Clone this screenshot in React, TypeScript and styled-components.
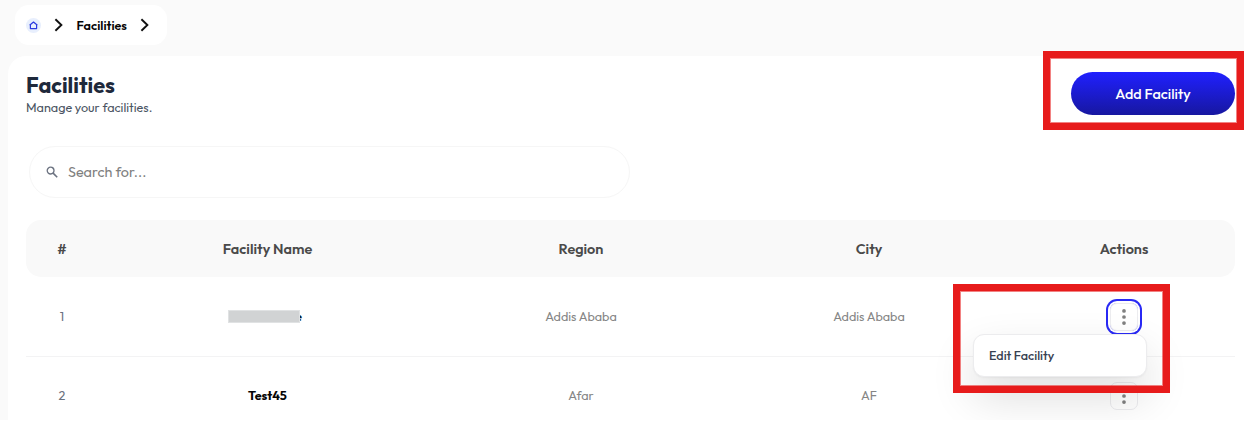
import React from "react";
import styled, { createGlobalStyle } from "styled-components";

const GlobalStyle = createGlobalStyle`
  *, *::before { box-sizing: border-box; }
  html, body { margin: 0; height: 421px; overflow: hidden; background: #fff; }
  body { font-family: Outfit, Lato, sans-serif; }
`;

const Page = styled.div`
  position: relative;
  width: 1244px;
  height: 420px;
  overflow: hidden;
  padding-top: 5px;
  background: #fafafa;
`;

const Label = styled.span<{ $size: number; $weight?: number; $color: string }>`
  font-size: ${(p) => p.$size}px;
  font-weight: ${(p) => p.$weight ?? 400};
  color: ${(p) => p.$color};
  line-height: 20px;
  white-space: nowrap;
`;

const CellText = styled(Label)`
  padding-bottom: 2px;
`;

const Breadcrumb = styled.nav`
  display: flex;
  align-items: center;
  width: 152px;
  height: 40px;
  margin-left: 15px;
  padding-left: 11px;
  border-radius: 14px;
  background: #fff;
`;

const HomeBadge = styled.span`
  display: grid;
  place-items: center;
  width: 15px;
  height: 15px;
  margin-right: 13px;
  border-radius: 50%;
  background: #e8effd;
`;

const Crumb = styled.span`
  display: flex;
  width: 51px;
  margin: 0 12.5px 0 13.5px;
`;

const Panel = styled.main`
  height: 400px;
  margin: 11px 0 0 8px;
  padding: 16px 9px 0 18px;
  border-top-left-radius: 18px;
  background: #fff;
`;

const PanelHeader = styled.header`
  display: flex;
  justify-content: space-between;
  height: 74px;
`;

const Heading = styled.div`
  display: flex;
  flex-direction: column;
`;

const Title = styled.h1`
  margin: 0 0 -2px;
  font-size: 21.6px;
  line-height: 27px;
  font-weight: 700;
  color: #1e293b;
`;

const AddButton = styled.button`
  width: 164px;
  height: 43px;
  padding: 0;
  border: 0;
  border-radius: 22px;
  font-family: inherit;
  background: linear-gradient(180deg, #2020ff, #1717a0);
`;

const SearchBox = styled.div`
  display: flex;
  align-items: center;
  gap: 9px;
  width: 601px;
  height: 52px;
  margin-left: 3px;
  padding-left: 16px;
  border: 1px solid #f6f6f6;
  border-radius: 26px;
`;

const Table = styled.div`
  margin-top: 22px;
`;

const Row = styled.div`
  display: grid;
  grid-template-columns: 72px 339px 288px 288px 222px;
  align-items: center;
  justify-items: center;
  height: 79px;
  & + & { border-top: 1px solid #f3f3f4; }
`;

const HeadRow = styled(Row)`
  height: 57px;
  border-radius: 15px;
  background: #f9f9f9;
  & + ${Row} { border-top: 0; }
`;

const Redacted = styled.span`
  position: relative;
  display: flex;
  justify-content: flex-end;
  width: 69px;
  &::before {
    content: "";
    position: absolute;
    left: -5px;
    top: 4px;
    width: 72px;
    height: 13px;
    border: 1px solid #e0e2e3;
    background: #d1d3d4;
  }
`;

const MoreButton = styled.button<{ $active?: boolean }>`
  display: grid;
  place-items: center;
  width: 28px;
  height: 28px;
  padding: 0;
  border: 1px solid #ececef;
  border-radius: 7px;
  background: transparent;
  box-shadow: ${(p) => (p.$active ? "0 0 0 2px #fff, 0 0 0 4px #2929f5" : "none")};
`;

const Menu = styled.div`
  position: absolute;
  left: 973px;
  top: 334px;
  display: flex;
  align-items: center;
  width: 174px;
  height: 43px;
  padding-left: 15px;
  border: 1px solid #ececee;
  border-radius: 11px;
  background: #fff;
  box-shadow: 0 20px 45px rgba(0, 0, 0, 0.14), 0 1px 2px rgba(0, 0, 0, 0.04);
`;

const Highlight = styled.div<{ $x: number; $y: number; $w: number; $h: number }>`
  position: absolute;
  left: ${(p) => p.$x}px;
  top: ${(p) => p.$y}px;
  width: ${(p) => p.$w}px;
  height: ${(p) => p.$h}px;
  border: 7px solid #e71b1b;
  box-shadow: inset 0 0 0 1px rgba(231, 27, 27, 0.55);
`;

const HomeIcon = () => (
  <svg width="9" height="9" viewBox="0 0 9 9" fill="none" stroke="#2c3be0" strokeWidth="1.2" strokeLinejoin="round">
    <path d="M.6 4.3 4.5 1l3.9 3.3M1.4 3.9v3.7h6.2V3.9" />
  </svg>
);

const Chevron = () => (
  <svg width="9" height="14" viewBox="0 0 9 14" fill="none" stroke="#111" strokeWidth="1.9">
    <path d="M1.4 1.2 7.4 7l-6 5.8" />
  </svg>
);

const SearchIcon = () => (
  <svg width="13" height="13" viewBox="0 0 13 13" fill="none" stroke="#6b7280" strokeWidth="1.3">
    <circle cx="4.6" cy="4.6" r="3.4" />
    <path d="m7.1 7.1 4.1 4.1" strokeWidth="1.6" />
  </svg>
);

const Dots = () => (
  <svg width="6" height="18" viewBox="0 0 6 18" fill="#808080">
    <circle cx="3" cy="2.9" r="1.85" />
    <circle cx="3" cy="9" r="1.85" />
    <circle cx="3" cy="15.1" r="1.85" />
  </svg>
);

const columns = ["#", "Facility Name", "Region", "City", "Actions"];

export default function App() {
  return (
    <Page>
      <GlobalStyle />
      <Breadcrumb>
        <HomeBadge><HomeIcon /></HomeBadge>
        <Chevron />
        <Crumb><Label $size={12.6} $weight={600} $color="#050505">Facilities</Label></Crumb>
        <Chevron />
      </Breadcrumb>
      <Panel>
        <PanelHeader>
          <Heading>
            <Title>Facilities</Title>
            <Label $size={12.6} $color="#4b5563">Manage your facilities.</Label>
          </Heading>
          <AddButton>
            <Label $size={14.4} $weight={500} $color="#fff">Add Facility</Label>
          </AddButton>
        </PanelHeader>
        <SearchBox>
          <SearchIcon />
          <Label $size={14.4} $color="#7f7f7f">Search for...</Label>
        </SearchBox>
        <Table>
          <HeadRow>
            {columns.map((name) => (
              <Label key={name} $size={14.4} $weight={600} $color="#4a4a4a">{name}</Label>
            ))}
          </HeadRow>
          <Row>
            <CellText $size={12.6} $color="#6b7280">1</CellText>
            <Redacted><CellText $size={12.6} $weight={700} $color="#0b1b2b">e</CellText></Redacted>
            <CellText $size={12.6} $color="#858585">Addis Ababa</CellText>
            <CellText $size={12.6} $color="#858585">Addis Ababa</CellText>
            <MoreButton $active aria-label="Actions"><Dots /></MoreButton>
          </Row>
          <Row>
            <CellText $size={12.6} $color="#6b7280">2</CellText>
            <CellText $size={12.6} $weight={700} $color="#050505">Test45</CellText>
            <CellText $size={12.6} $color="#858585">Afar</CellText>
            <CellText $size={12.6} $color="#858585">AF</CellText>
            <MoreButton aria-label="Actions"><Dots /></MoreButton>
          </Row>
        </Table>
      </Panel>
      <Menu>
        <CellText $size={12.6} $weight={500} $color="#374151">Edit Facility</CellText>
      </Menu>
      <Highlight $x={1043} $y={51} $w={201} $h={79} />
      <Highlight $x={953} $y={284} $w={217} $h={109} />
    </Page>
  );
}
